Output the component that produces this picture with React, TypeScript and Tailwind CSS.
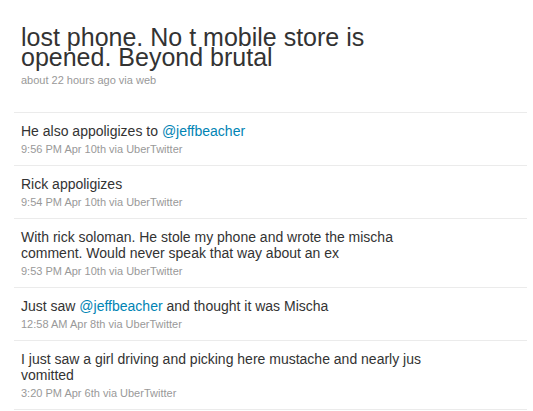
const tweets = [
  {
    parts: ['He also appoligizes to ', '@jeffbeacher'],
    meta: '9:56 PM Apr 10th via UberTwitter',
  },
  {
    parts: ['Rick appoligizes'],
    meta: '9:54 PM Apr 10th via UberTwitter',
  },
  {
    parts: ['With rick soloman. He stole my phone and wrote the mischa comment. Would never speak that way about an ex'],
    meta: '9:53 PM Apr 10th via UberTwitter',
  },
  {
    parts: ['Just saw ', '@jeffbeacher', ' and thought it was Mischa'],
    meta: '12:58 AM Apr 8th via UberTwitter',
  },
  {
    parts: ['I just saw a girl driving and picking here mustache and nearly jus vomitted'],
    meta: '3:20 PM Apr 6th via UberTwitter',
  },
];

function TweetText({ parts }: { parts: string[] }) {
  return (
    <p className="w-[432px] text-[14px] leading-[16px] text-[#333]">
      {parts.map((p, i) =>
        p.startsWith('@') ? (
          <span key={i} className="text-[#0084b4]">{p}</span>
        ) : (
          <span key={i}>{p}</span>
        )
      )}
    </p>
  );
}

export default function App() {
  return (
    <div
      className="min-h-[411px] w-[533px] bg-white"
      style={{ fontFamily: '"Liberation Sans", Arial, sans-serif' }}
    >
      <div className="ml-[14px] w-[513px]">
        {/* Main status */}
        <div className="pl-[7px] pt-[27px] pb-[25px] border-b border-[#ebebeb]">
          <h1 className="w-[395px] text-[25px] leading-[20px] text-[#333]">
            lost phone. No t mobile store is opened. Beyond brutal
          </h1>
          <div className="mt-[6px] text-[11px] leading-[14px] text-[#999]">
            about 22 hours ago via web
          </div>
        </div>

        {/* Timeline */}
        {tweets.map((t, i) => (
          <div key={i} className="pl-[7px] pt-[10px] pb-[9px] border-b border-[#ebebeb]">
            <TweetText parts={t.parts} />
            <div className="mt-[3px] text-[11px] leading-[14px] text-[#999]">{t.meta}</div>
          </div>
        ))}
      </div>
    </div>
  );
}
